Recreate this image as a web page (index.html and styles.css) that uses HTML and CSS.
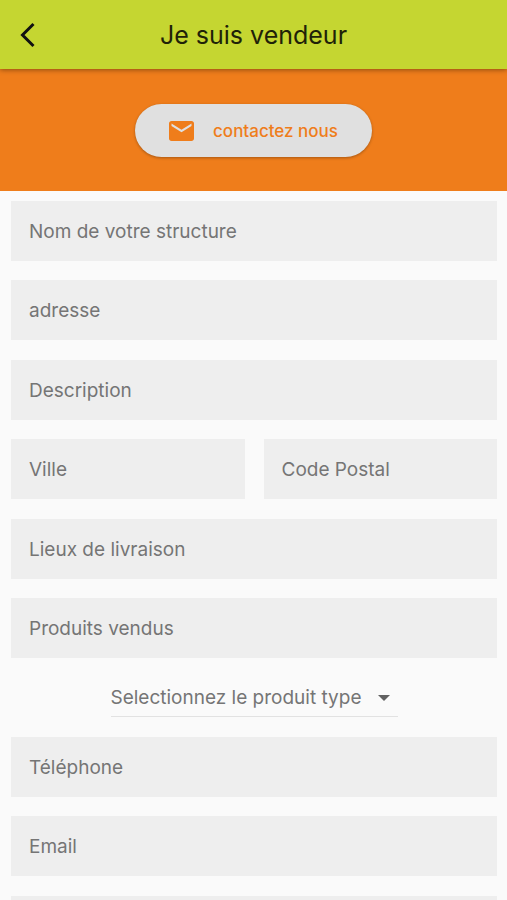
FILE: index.html
```html
<!DOCTYPE html>
<html lang="fr">
<head>
<meta charset="utf-8">
<meta name="viewport" content="width=device-width, initial-scale=1">
<title>Je suis vendeur</title>
<link rel="stylesheet" href="styles.css">
</head>
<body>
<header class="app-bar">
  <button class="back" type="button" aria-label="Retour">
    <svg width="16" height="26" viewBox="0 0 16 26" aria-hidden="true"><path d="M13.5 2 2.5 13l11 11" fill="none" stroke="currentColor" stroke-width="3"/></svg>
  </button>
  <h1 class="title">Je suis vendeur</h1>
</header>
<main>
  <section class="banner">
    <button class="contact" type="button">
      <svg width="25" height="20" viewBox="2 4 20 16" preserveAspectRatio="none" aria-hidden="true"><path fill="currentColor" d="M20 4H4c-1.1 0-2 .9-2 2v12c0 1.1.9 2 2 2h16c1.1 0 2-.9 2-2V6c0-1.1-.9-2-2-2zm0 4-8 5-8-5V6l8 5 8-5v2z"/></svg>
      contactez nous
    </button>
  </section>
  <form class="form">
    <div class="group">
      <input class="field" type="text" placeholder="Nom de votre structure" aria-label="Nom de votre structure">
      <input class="field" type="text" placeholder="adresse" aria-label="adresse">
    </div>
    <div class="group">
      <input class="field" type="text" placeholder="Description" aria-label="Description">
      <div class="row">
        <input class="field" type="text" placeholder="Ville" aria-label="Ville">
        <input class="field" type="text" placeholder="Code Postal" aria-label="Code Postal">
      </div>
    </div>
    <div class="group">
      <input class="field" type="text" placeholder="Lieux de livraison" aria-label="Lieux de livraison">
      <input class="field" type="text" placeholder="Produits vendus" aria-label="Produits vendus">
    </div>
    <div class="picker">
      <select class="select" aria-label="Produit type">
        <option>Selectionnez le produit type</option>
      </select>
      <svg class="arrow" width="12" height="6" viewBox="0 0 12 6" aria-hidden="true"><path fill="currentColor" d="M0 0h12L6 6z"/></svg>
    </div>
    <div class="group">
      <input class="field" type="tel" placeholder="Téléphone" aria-label="Téléphone">
      <input class="field" type="email" placeholder="Email" aria-label="Email">
    </div>
    <div class="group">
      <input class="field" type="text" aria-label="Informations">
    </div>
  </form>
</main>
</body>
</html>
```
FILE: styles.css
```css
* {
  box-sizing: border-box;
}

body {
  margin: 0;
  background: #fafafa;
  color: #757575;
  font-family: Inter, "Liberation Sans", sans-serif;
}

button,
input,
select {
  margin: 0;
  border: 0;
  font: inherit;
}

.app-bar {
  position: relative;
  display: grid;
  grid-template-columns: 56px 1fr 56px;
  align-items: center;
  height: 69px;
  background: #c5d631;
  box-shadow: 0 1px 5px rgba(0, 0, 0, 0.4);
}

.back {
  display: flex;
  justify-content: center;
  padding: 8px;
  background: none;
  color: #111;
}

.title {
  margin: 0;
  color: #1f2208;
  font-size: 25px;
  font-weight: 400;
  line-height: 32px;
  text-align: center;
}

.banner {
  display: flex;
  justify-content: center;
  padding: 35px 16px 34px;
  background: #ef7d1b;
}

.contact {
  display: flex;
  align-items: center;
  gap: 19px;
  height: 53px;
  padding: 0 34px;
  border-radius: 27px;
  background: #e0e0e0;
  box-shadow: 0 1px 3px rgba(0, 0, 0, 0.3);
  color: #ef7d1b;
  font-size: 17px;
  font-weight: 500;
}

.form {
  display: flex;
  flex-direction: column;
  gap: 20px;
  padding: 10px 10px 20px 11px;
}

.group {
  display: flex;
  flex-direction: column;
  gap: 19px;
}

.row {
  display: grid;
  grid-template-columns: 1fr 1fr;
  gap: 19px;
}

.field {
  width: 100%;
  height: 60px;
  padding: 0 18px;
  border-radius: 0;
  background: #eee;
  color: #212121;
  font-size: 19px;
}

.field::placeholder {
  color: #757575;
  opacity: 1;
}

.picker {
  position: relative;
  align-self: center;
}

.select {
  display: block;
  appearance: none;
  height: 39px;
  padding: 0 36px 0 0;
  border-bottom: 1px solid #e2e2e2;
  border-radius: 0;
  background: transparent;
  color: #757575;
  font-size: 19px;
}

.arrow {
  position: absolute;
  top: 17px;
  right: 8px;
  color: #616161;
  pointer-events: none;
}
```
